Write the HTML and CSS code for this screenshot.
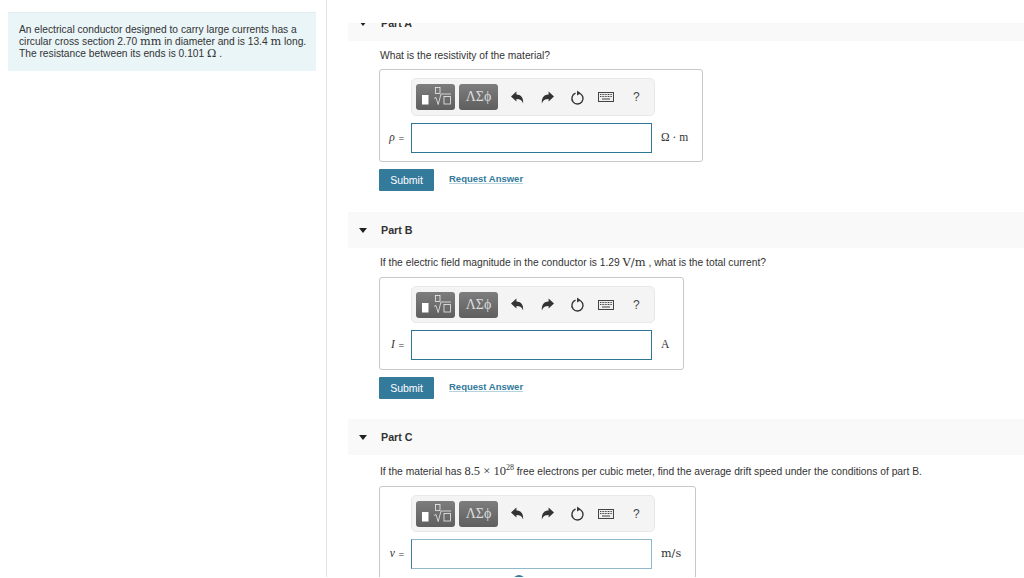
FILE: index.html
```html
<!DOCTYPE html>
<html lang="en">
<head>
    <meta charset="UTF-8">
    <meta name="viewport" content="width=device-width, initial-scale=1.0">
    <title>Conductor Problem</title>
    <link rel="stylesheet" href="styles.css">
</head>
<body>
    <svg class="icon-defs" aria-hidden="true">
        <symbol id="icon-template" viewBox="0 0 39 26">
            <rect x="6" y="11" width="6.5" height="9.5" fill="#fff"/>
            <rect x="19.5" y="3.5" width="4.5" height="6" fill="none" stroke="#eee" stroke-width="0.8"/>
            <path d="M18 14.5l2-1 2.2 7 2.8-10.5h10" fill="none" stroke="#eee" stroke-width="0.8"/>
            <rect x="28" y="12.5" width="6.5" height="7.5" fill="none" stroke="#eee" stroke-width="0.8"/>
        </symbol>
        <symbol id="icon-undo" viewBox="1 1 12 12">
            <path d="M1 6L6 1.5V4.3C10 4.3 12.6 7 12.2 12.5C11.3 9.8 9.5 8.4 6 8.4V10.8Z" fill="#333"/>
        </symbol>
        <symbol id="icon-redo" viewBox="1 1 12 12">
            <path d="M13 6L8 1.5V4.3C4 4.3 1.4 7 1.8 12.5C2.7 9.8 4.5 8.4 8 8.4V10.8Z" fill="#333"/>
        </symbol>
        <symbol id="icon-reset" viewBox="0 0 14 14">
            <path d="M8.4 2.9A5.2 5.2 0 1 1 5.2 3" fill="none" stroke="#333" stroke-width="1.3"/>
            <path d="M6.6 0.4L10 3L6.6 5.2Z" fill="#333"/>
        </symbol>
        <symbol id="icon-keyboard" viewBox="0 0 16 10">
            <rect x="0.5" y="0.5" width="15" height="9" fill="#eee" stroke="#444"/>
            <path d="M2 2.5h12M2 4.5h12" stroke="#444" stroke-dasharray="1 0.6"/>
            <path d="M4 7h8" stroke="#444"/>
        </symbol>
    </svg>

    <div class="layout">
        <aside class="sidebar">
            <div class="intro">
                An electrical conductor designed to carry large currents has a circular cross section 2.70 <span class="math">mm</span> in diameter and is 13.4 <span class="math">m</span> long. The resistance between its ends is 0.101 <span class="math">Ω</span> .
            </div>
        </aside>

        <main class="parts">
            <section class="part part-first">
                <div class="part-header"><span class="caret"></span><h2>Part A</h2></div>
                <p class="question">What is the resistivity of the material?</p>
                <div class="answer-box">
                    <div class="toolbar">
                        <span class="tool-btn"><svg class="tool-template"><use href="#icon-template"/></svg></span>
                        <span class="tool-btn tool-greek">ΛΣϕ</span>
                        <svg class="icon icon-undo"><use href="#icon-undo"/></svg>
                        <svg class="icon icon-redo"><use href="#icon-redo"/></svg>
                        <svg class="icon icon-reset"><use href="#icon-reset"/></svg>
                        <svg class="icon-kbd"><use href="#icon-keyboard"/></svg>
                        <span class="tool-help">?</span>
                    </div>
                    <div class="answer-row">
                        <label class="answer-label"><i class="var">ρ</i> =</label>
                        <div class="answer-input"></div>
                        <span class="unit">Ω · m</span>
                    </div>
                </div>
                <div class="actions">
                    <button class="submit">Submit</button>
                    <a class="request" href="#">Request Answer</a>
                </div>
            </section>

            <section class="part">
                <div class="part-header"><span class="caret"></span><h2>Part B</h2></div>
                <p class="question question-b">If the electric field magnitude in the conductor is 1.29 <span class="math math-unit">V/m</span> , what is the total current?</p>
                <div class="answer-box">
                    <div class="toolbar">
                        <span class="tool-btn"><svg class="tool-template"><use href="#icon-template"/></svg></span>
                        <span class="tool-btn tool-greek">ΛΣϕ</span>
                        <svg class="icon icon-undo"><use href="#icon-undo"/></svg>
                        <svg class="icon icon-redo"><use href="#icon-redo"/></svg>
                        <svg class="icon icon-reset"><use href="#icon-reset"/></svg>
                        <svg class="icon-kbd"><use href="#icon-keyboard"/></svg>
                        <span class="tool-help">?</span>
                    </div>
                    <div class="answer-row">
                        <label class="answer-label"><i class="var">I</i> =</label>
                        <div class="answer-input"></div>
                        <span class="unit">A</span>
                    </div>
                </div>
                <div class="actions">
                    <button class="submit">Submit</button>
                    <a class="request" href="#">Request Answer</a>
                </div>
            </section>

            <section class="part">
                <div class="part-header"><span class="caret"></span><h2>Part C</h2></div>
                <p class="question question-c">If the material has <span class="math-num">8.5 × 10<sup>28</sup></span> free electrons per cubic meter, find the average drift speed under the conditions of part B.</p>
                <div class="answer-box answer-box-open">
                    <div class="toolbar">
                        <span class="tool-btn"><svg class="tool-template"><use href="#icon-template"/></svg></span>
                        <span class="tool-btn tool-greek">ΛΣϕ</span>
                        <svg class="icon icon-undo"><use href="#icon-undo"/></svg>
                        <svg class="icon icon-redo"><use href="#icon-redo"/></svg>
                        <svg class="icon icon-reset"><use href="#icon-reset"/></svg>
                        <svg class="icon-kbd"><use href="#icon-keyboard"/></svg>
                        <span class="tool-help">?</span>
                    </div>
                    <div class="answer-row">
                        <label class="answer-label"><i class="var">v</i> =</label>
                        <div class="answer-input answer-input-light"></div>
                        <span class="unit unit-wide">m/s</span>
                    </div>
                    <div class="spinner"></div>
                </div>
            </section>
        </main>
    </div>
</body>
</html>
```

FILE: styles.css
```css
html, body {
    margin: 0;
    padding: 0;
    background: #fff;
}
body {
    font-family: "Liberation Sans", Arial, sans-serif;
    font-size: 10px;
    color: #333;
    height: 578px;
    overflow: hidden;
}
.icon-defs {
    display: none;
}
.layout {
    display: flex;
    height: 577px;
}
.sidebar {
    box-sizing: border-box;
    flex: 0 0 327px;
    padding: 12px 10px 0 8px;
    border-right: 1px solid #e4e4e4;
}
.intro {
    background: #eaf5f8;
    border-top: 1px solid #e2ecef;
    padding: 11px 8px 10px 11px;
    font-size: 10.22px;
    line-height: 12px;
    height: 37px;
}
.math {
    font-family: "DejaVu Serif", serif;
    font-size: 11.3px;
    line-height: 0;
}
.math-unit {
    font-size: 11.5px;
}
.math-num {
    font-family: "Liberation Serif", serif;
    font-size: 12.5px;
    line-height: 0;
}
.math-num sup {
    font-size: 8px;
    line-height: 0;
}
.parts {
    flex: 1;
    margin: 23px 0 0 21px;
    overflow: hidden;
}
.part-first {
    margin-top: -18px;
}
.part-header {
    display: flex;
    align-items: center;
    height: 36px;
    background: #f9f9f9;
}
.part-header h2 {
    margin: 0;
    font-size: 10.7px;
    font-weight: bold;
    color: #333;
}
.caret {
    width: 0;
    height: 0;
    margin: 0 14px 0 11px;
    border-left: 4.5px solid transparent;
    border-right: 4.5px solid transparent;
    border-top: 5px solid #222;
}
.question {
    margin: 0;
    padding: 8px 0 0 32px;
    height: 20px;
    line-height: 14px;
    font-size: 10.28px;
}
.question-b {
    height: 21px;
}
.question-c {
    padding-top: 10px;
    height: 21px;
}
.answer-box {
    box-sizing: border-box;
    width: fit-content;
    height: 93px;
    margin-left: 31px;
    padding: 8px 14px 0 0;
    border: 1px solid #c8c8c8;
    border-radius: 3px;
}
.answer-box-open {
    height: 120px;
}
.toolbar {
    box-sizing: border-box;
    display: flex;
    align-items: center;
    width: 244px;
    height: 38px;
    margin-left: 31px;
    padding: 0 0 0 4px;
    background: #f4f4f4;
    border: 1px solid #e8e8e8;
    border-radius: 5px;
}
.part + .part .toolbar {
    height: 37px;
}
.tool-btn {
    box-sizing: border-box;
    display: block;
    width: 39px;
    height: 26px;
    margin-right: 4px;
    border-radius: 3px;
    background: linear-gradient(#7d7d7d, #5f5f5f);
}
.tool-template {
    display: block;
    width: 39px;
    height: 26px;
}
.tool-greek {
    font-family: "Liberation Serif", serif;
    font-size: 14px;
    line-height: 26px;
    text-align: center;
    color: #ddd;
}
.icon {
    width: 13px;
    height: 13px;
}
.icon-undo {
    margin-left: 9px;
}
.icon-redo {
    margin-left: 17px;
}
.icon-reset {
    width: 15px;
    height: 15px;
    margin-left: 16px;
}
.icon-kbd {
    width: 16px;
    height: 10px;
    margin-left: 13px;
}
.tool-help {
    margin-left: 19px;
    font-size: 12px;
    color: #444;
}
.answer-row {
    display: flex;
    align-items: center;
    margin-top: 7px;
}
.answer-label {
    box-sizing: border-box;
    width: 31px;
    padding: 0 7px 2px 0;
    text-align: right;
    font-size: 9.5px;
    word-spacing: 1px;
}
.var {
    font-family: "Liberation Serif", serif;
    font-size: 11.5px;
}
.answer-input {
    box-sizing: border-box;
    width: 241px;
    height: 30px;
    border: 1px solid #2f7594;
}
.answer-input-light {
    border-color: #8fb9cb;
    border-left-color: #3b7d9a;
}
.unit {
    margin-left: 9px;
    padding-bottom: 2px;
    font-family: "Liberation Serif", serif;
    font-size: 11.5px;
}
.unit-wide {
    font-family: "DejaVu Serif", serif;
    font-size: 11.2px;
}
.spinner {
    width: 12px;
    height: 12px;
    margin: 6px 0 0 133px;
    border-radius: 50%;
    background: #347a9b;
}
.actions {
    display: flex;
    align-items: center;
    height: 22px;
    margin: 7px 0 21px 31px;
}
.part + .part .actions {
    margin-bottom: 20px;
}
.submit {
    width: 55px;
    height: 22px;
    padding: 0;
    background-color: #347a9b;
    color: #fff;
    border: none;
    border-radius: 1px;
    font-family: inherit;
    font-size: 10.5px;
}
.request {
    margin: 0 0 3px 15px;
    font-size: 9.5px;
    font-weight: bold;
    color: #347a9b;
    text-decoration: underline;
    text-decoration-color: #b5d2de;
}
```
